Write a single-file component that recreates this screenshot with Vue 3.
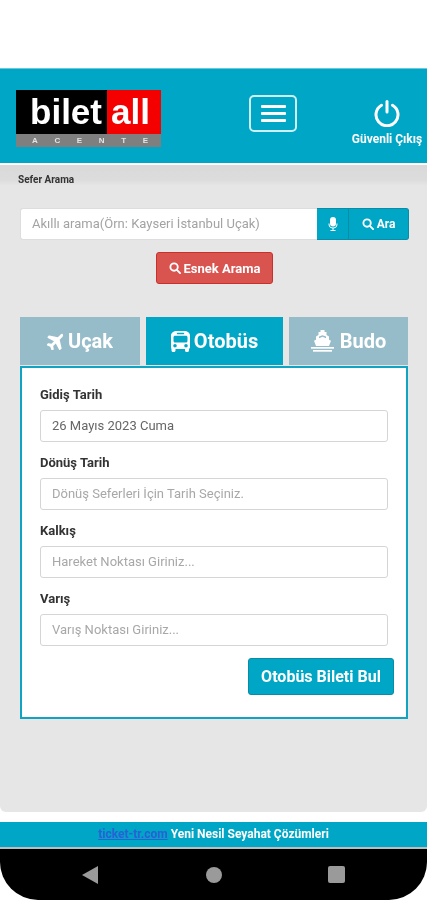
<script setup>
const alanlar = [
  { etiket: "Gidiş Tarih", yazi: "26 Mayıs 2023 Cuma", dolu: true },
  { etiket: "Dönüş Tarih", yazi: "Dönüş Seferleri İçin Tarih Seçiniz.", dolu: false },
  { etiket: "Kalkış", yazi: "Hareket Noktası Giriniz...", dolu: false },
  { etiket: "Varış", yazi: "Varış Noktası Giriniz...", dolu: false },
];
</script>

<template>
  <div class="sayfa">
    <div class="ust-bosluk"></div>

    <header class="baslik">
      <div class="logo">
        <div class="logo-ust">
          <span class="logo-bilet">bilet</span>
          <span class="logo-all">all</span>
        </div>
        <div class="logo-alt">
          <span>A</span><span>C</span><span>E</span><span>N</span><span>T</span><span>E</span>
        </div>
      </div>
      <button class="menu-btn">
        <span></span><span></span><span></span>
      </button>
      <div class="cikis">
        <svg width="28" height="28" viewBox="0 0 28 28" fill="none" stroke="#fff" stroke-width="3" stroke-linecap="round">
          <path d="M14 2.5V13" />
          <path d="M8.5 6.2a11 11 0 1 0 11 0" />
        </svg>
        <span>Güvenli Çıkış</span>
      </div>
    </header>

    <main class="panel">
      <div class="panel-baslik">Sefer Arama</div>

      <div class="arama">
        <div class="arama-girdi">Akıllı arama(Örn: Kayseri İstanbul Uçak)</div>
        <button class="arama-mic">
          <svg width="10" height="14" viewBox="0 0 10 14" fill="#fff">
            <rect x="2" y="0" width="6" height="9.5" rx="3" />
            <path d="M0.5 6.5h1v.5a3.5 3.5 0 0 0 7 0v-.5h1V7a4.5 4.5 0 0 1-4 4.4V13h2v1h-5v-1h2v-1.6A4.500 4.500 0 0 1 .5 7z" />
          </svg>
        </button>
        <button class="arama-ara">
          <svg width="12" height="12" viewBox="0 0 13 13" fill="none" stroke="#fff" stroke-width="2" stroke-linecap="round">
            <circle cx="5.500" cy="5.500" r="4" />
            <path d="M8.500 8.500L12 12" />
          </svg>
          Ara
        </button>
      </div>

      <div class="esnek-satir">
        <button class="esnek">
          <svg width="12" height="12" viewBox="0 0 13 13" fill="none" stroke="#fff" stroke-width="2" stroke-linecap="round">
            <circle cx="5.500" cy="5.500" r="4" />
            <path d="M8.500 8.500L12 12" />
          </svg>
          Esnek Arama
        </button>
      </div>

      <div class="sekmeler">
        <div class="sekme sekme-ucak">
          <svg width="17" height="17" viewBox="0 0 24 24" fill="#fff">
            <path d="M21.600 1.200c1.300.9 1.500 2.300.6 3.700-.4.700-1 1.300-1.600 1.900l-2.700 2.700 2.700 11.600c.1.400 0 .7-.3 1l-1.600 1.600c-.5.500-1.300.4-1.600-.2l-4.700-8.700-3.600 3.600.7 4.100c.1.400 0 .7-.3 1l-1.200 1.200c-.5.500-1.200.4-1.600-.2L4.600 19.400.2 17.600c-.6-.3-.7-1.100-.2-1.600l1.200-1.200c.3-.3.600-.4 1-.3l4.100.7 3.600-3.600-8.700-4.700C.6 6.600.5 5.800 1 5.300l1.600-1.600c.3-.3.600-.4 1-.3l11.600 2.700 2.700-2.700c.6-.6 1.200-1.200 1.900-1.600.8-.5 1.600-.7 2.800-.6z" />
          </svg>
          Uçak
        </div>
        <div class="sekme sekme-otobus">
          <svg width="19" height="21" viewBox="0 0 19 21" fill="#fff">
            <path fill-rule="evenodd" d="M6 0h7c3.600 0 6 1.800 6 4.500V16c0 1-.5 1.600-1 1.900v1.600c0 .8-.7 1.500-1.500 1.500h-1c-.8 0-1.500-.7-1.500-1.500V18H4.500v1.500c0 .8-.7 1.500-1.500 1.500H2c-.8 0-1.500-.7-1.500-1.500v-1.600C.3 17.600 0 17 0 16V4.500C0 1.800 2.400 0 6 0zM6.500 1.800a.7.7 0 0 0 0 1.400h6a.7.7 0 0 0 0-1.400zM4 4.800c-.8 0-1.500.7-1.500 1.500V10c0 .8.700 1.500 1.500 1.500h11c.8 0 1.500-.7 1.500-1.500V6.300c0-.8-.7-1.500-1.500-1.500zM4 13a1.800 1.800 0 1 0 0 3.600A1.800 1.800 0 0 0 4 13zm11 0a1.800 1.800 0 1 0 0 3.600A1.800 1.800 0 0 0 15 13z" />
          </svg>
          Otobüs
        </div>
        <div class="sekme sekme-budo">
          <svg width="23" height="22" viewBox="0 0 23 22" fill="#fff">
            <path fill-rule="evenodd" d="M9.500 0h4v2H15.500v3l2.500 1.500v3.300l2 .9-2 5.300H5L3 10.700l2-.9V6.500L7.500 5V2h2zM8 6.500v1.800l3.500-1.500 3.500 1.500V6.500l-3.500-1.300z" />
            <rect x="0" y="17" width="23" height="1.700" />
            <rect x="2" y="20" width="19" height="1.700" />
          </svg>
          Budo
        </div>
      </div>

      <div class="kart">
        <div v-for="alan in alanlar" :key="alan.etiket" class="alan">
          <label>{{ alan.etiket }}</label>
          <div class="girdi" :class="{ dolu: alan.dolu }">{{ alan.yazi }}</div>
        </div>
        <div class="kart-alt">
          <button class="bul">Otobüs Bileti Bul</button>
        </div>
      </div>
    </main>

    <footer class="altbilgi">
      <a class="site">ticket-tr.com</a> Yeni Nesil Seyahat Çözümleri
    </footer>

    <nav class="android">
      <svg width="18" height="20" viewBox="0 0 18 20" fill="#9a9a9a"><path d="M17 1v18L1 10z" /></svg>
      <span class="daire"></span>
      <span class="kare"></span>
    </nav>
  </div>
</template>

<style scoped>
.sayfa {
  width: 427px;
  height: 900px;
  background: #fff;
  font-family: Roboto, "Liberation Sans", sans-serif;
  overflow: hidden;
  display: flex;
  flex-direction: column;
  filter: blur(0.5px);
}
.ust-bosluk {
  height: 68px;
}
.baslik {
  height: 95px;
  background: #00a6c6;
  border-top: 1px solid #6cc9dc;
  box-sizing: border-box;
  padding-left: 16px;
  display: flex;
  align-items: flex-start;
}
.logo {
  width: 145px;
  height: 57px;
  margin-top: 21px;
  display: flex;
  flex-direction: column;
  flex-shrink: 0;
}
.logo-ust {
  height: 44px;
  display: flex;
  font-family: "Liberation Sans", Arial, sans-serif;
  font-weight: 700;
  font-size: 35px;
  line-height: 44px;
  color: #fff;
}
.logo-bilet {
  width: 91px;
  background: #000;
  text-align: right;
  padding-right: 5px;
  box-sizing: border-box;
}
.logo-all {
  width: 54px;
  background: #f50000;
  padding-left: 4px;
  box-sizing: border-box;
}
.logo-alt {
  height: 13px;
  background: #7f7f7f;
  color: #e4e4e4;
  font-family: "Liberation Sans", Arial, sans-serif;
  font-size: 8px;
  font-weight: 700;
  display: flex;
  align-items: center;
  justify-content: space-between;
  padding: 0 13px 0 16px;
}
.menu-btn {
  width: 48px;
  height: 37px;
  margin: 26px 0 0 88px;
  background: transparent;
  border: 2px solid #cfeff6;
  border-radius: 5px;
  display: flex;
  flex-direction: column;
  align-items: center;
  justify-content: center;
  gap: 4px;
  padding: 0;
  flex-shrink: 0;
}
.menu-btn span {
  width: 25px;
  height: 3px;
  background: #fff;
  border-radius: 1px;
}
.cikis {
  margin: 30px 0 0 52px;
  width: 76px;
  flex-shrink: 0;
  display: flex;
  flex-direction: column;
  align-items: center;
  color: #fff;
  font-size: 12px;
  font-weight: 700;
  gap: 5px;
  white-space: nowrap;
}
.panel {
  margin-top: 2px;
  height: 647px;
  box-sizing: border-box;
  background: #e6e6e6;
  border-radius: 0 0 6px 6px;
  padding: 0 19px 0 20px;
  flex-shrink: 0;
}
.panel-baslik {
  margin: 0 -19px 0 -20px;
  padding-left: 18px;
  height: 21px;
  line-height: 29px;
  font-size: 10px;
  font-weight: 700;
  color: #333;
  background: linear-gradient(#d9d9d9, #dcdcdc 70%, #e6e6e6);
}
.arama {
  margin-top: 22px;
  width: 389px;
  height: 32px;
  display: flex;
}
.arama-girdi {
  width: 297px;
  flex-shrink: 0;
  background: #fff;
  border: 1px solid #ddd;
  border-right: 0;
  border-radius: 3px 0 0 3px;
  box-sizing: border-box;
  font-size: 13px;
  line-height: 30px;
  padding-left: 11px;
  color: #a3a3a3;
  white-space: nowrap;
  overflow: hidden;
}
.arama-mic,
.arama-ara,
.bul {
  background: #00a6c6;
  border: 1px solid #0a8ba6;
  color: #fff;
  font-family: inherit;
  font-weight: 700;
}
.arama-mic {
  width: 32px;
  flex-shrink: 0;
  padding: 0;
  border-width: 1px 1px 1px 0;
  display: flex;
  align-items: center;
  justify-content: center;
}
.arama-ara {
  width: 60px;
  flex-shrink: 0;
  padding: 0;
  border-left: 0;
  border-radius: 0 3px 3px 0;
  font-size: 12px;
  display: flex;
  align-items: center;
  justify-content: center;
  gap: 3px;
}
.esnek-satir {
  margin-top: 12px;
  padding-left: 136px;
}
.esnek {
  width: 117px;
  height: 32px;
  padding: 0;
  background: #d9534f;
  border: 1px solid #c9302c;
  border-radius: 3px;
  color: #fff;
  font-family: inherit;
  font-size: 13px;
  font-weight: 700;
  display: flex;
  align-items: center;
  justify-content: center;
  gap: 3px;
}
.sekmeler {
  margin-top: 33px;
  height: 48px;
  width: 388px;
  display: flex;
  gap: 6px;
}
.sekme {
  background: #96bcc9;
  color: #fff;
  font-size: 20px;
  font-weight: 700;
  display: flex;
  align-items: center;
  justify-content: center;
  gap: 4px;
}
.sekme-ucak {
  width: 120px;
}
.sekme-otobus {
  width: 137px;
  background: #00a6c6;
}
.sekme-budo {
  width: 119px;
  gap: 6px;
}
.kart {
  margin-top: 1px;
  width: 388px;
  height: 353px;
  box-sizing: border-box;
  background: #fff;
  border: 2px solid #11a3c2;
  padding: 18px 18px 0;
}
.alan {
  height: 68px;
}
.alan label {
  display: block;
  height: 24px;
  font-size: 13px;
  font-weight: 700;
  line-height: 17px;
  color: #333;
}
.girdi {
  height: 32px;
  box-sizing: border-box;
  border: 1px solid #d5d5d5;
  border-radius: 3px;
  background: #fff;
  font-size: 13px;
  line-height: 30px;
  padding-left: 11px;
  color: #a8a8a8;
}
.girdi.dolu {
  color: #666;
}
.kart-alt {
  display: flex;
  justify-content: flex-end;
  margin-right: -6px;
}
.bul {
  width: 146px;
  height: 37px;
  padding: 0;
  border-radius: 3px;
  font-size: 16px;
}
.altbilgi {
  margin-top: 10px;
  height: 25px;
  background: #00a6c6;
  color: #fff;
  font-size: 12px;
  font-weight: 700;
  line-height: 25px;
  text-align: center;
  flex-shrink: 0;
}
.site {
  color: #2a5fd6;
  text-decoration: underline;
}
.android {
  margin-top: 2px;
  flex: 1;
  background: #000;
  border-radius: 0 0 38px 38px;
  box-shadow: 0 -2px 0 #bdbdbd;
  display: flex;
  align-items: center;
  justify-content: space-between;
  padding: 0 82px 0 81px;
}
.daire {
  width: 16px;
  height: 16px;
  border-radius: 50%;
  background: #9a9a9a;
}
.kare {
  width: 17px;
  height: 17px;
  border-radius: 2px;
  background: #9a9a9a;
}
</style>
